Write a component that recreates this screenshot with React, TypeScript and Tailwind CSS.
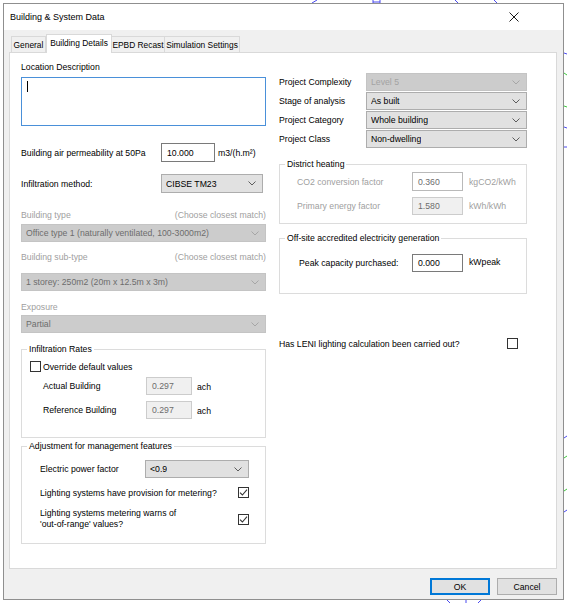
import clsx from "clsx";

function Chevron({ dim = false }: { dim?: boolean }) {
  return (
    <svg width="8" height="5" viewBox="0 0 8 5" className="shrink-0">
      <polyline
        points="0.5,0.5 4,4 7.5,0.5"
        fill="none"
        stroke={dim ? "#a6a6a6" : "#5c5c5c"}
        strokeWidth="1"
      />
    </svg>
  );
}

function Select({
  value,
  disabled = false,
  className,
  textClass,
}: {
  value: string;
  disabled?: boolean;
  className?: string;
  textClass?: string;
}) {
  return (
    <div
      className={clsx(
        "flex shrink-0 items-center justify-between border pl-[4px] pr-[6px]",
        disabled ? "border-[#c4c4c4] bg-[#cccccc]" : "border-[#adadad] bg-[#e1e1e1]",
        className,
      )}
    >
      <span className={clsx("truncate", textClass ?? (disabled ? "text-[#6d6d6d]" : "text-black"))}>
        {value}
      </span>
      <Chevron dim={disabled} />
    </div>
  );
}

function Field({
  value,
  className,
  variant = "normal",
}: {
  value: string;
  className?: string;
  variant?: "normal" | "readonly" | "disabled";
}) {
  return (
    <div
      className={clsx(
        "flex shrink-0 items-center border pl-[5px]",
        variant === "normal" && "border-[#7a7a7a] bg-white text-black",
        variant === "readonly" && "border-[#b9b9b9] bg-white text-[#6d6d6d]",
        variant === "disabled" && "border-[#cccccc] bg-[#f0f0f0] text-[#6d6d6d]",
        className,
      )}
    >
      {value}
    </div>
  );
}

function Check({ checked = false }: { checked?: boolean }) {
  return (
    <div className="flex h-[11px] w-[11px] shrink-0 items-center justify-center border border-[#333333] bg-white">
      {checked && (
        <svg width="9" height="9" viewBox="0 0 9 9">
          <path d="M1 4.6 L3.4 7 L8 1.6" fill="none" stroke="#333333" strokeWidth="1.1" />
        </svg>
      )}
    </div>
  );
}

function Group({
  title,
  className,
  children,
}: {
  title: string;
  className?: string;
  children: React.ReactNode;
}) {
  return (
    <fieldset className={clsx("border border-[#dcdcdc]", className)}>
      <legend className="ml-[5px] h-[12px] px-[2px] leading-[12px]">{title}</legend>
      {children}
    </fieldset>
  );
}

function Backdrop() {
  // bits of the drawing canvas that peek out round the dialog
  return (
    <svg className="absolute inset-0" width="567" height="603" viewBox="0 0 567 603">
      <g fill="none" strokeWidth="1">
        <path d="M312 3 L317 0" stroke="#4a4af0" />
        <path d="M373 0 L373 3 M380 0 L380 3 M373 2 L380 2" stroke="#4a4af0" />
        <path d="M455 0 L458 3" stroke="#4a4af0" />
        <path d="M494 0 L497 3" stroke="#4a4af0" />
        <path d="M564 53 L567 54" stroke="#4a4af0" />
        <path d="M564 73 L567 75" stroke="#3cc83c" />
        <path d="M564 106 L567 107" stroke="#3cc83c" />
        <path d="M564 127 L567 128" stroke="#4a4af0" />
        <path d="M564 147 L567 147" stroke="#4a4af0" />
        <path d="M564 438 L567 436" stroke="#4a4af0" />
        <path d="M564 458 L567 456" stroke="#3cc83c" />
        <path d="M564 491 L567 489" stroke="#3cc83c" />
        <path d="M564 512 L567 510" stroke="#4a4af0" />
        <path d="M447 600 L450 603 M466 600 L466 603 M478 603 L481 600" stroke="#4a4af0" />
      </g>
    </svg>
  );
}

const tabs = [
  { label: "General", w: "w-[35px]" },
  { label: "Building Details", w: "w-[66px]", active: true },
  { label: "EPBD Recast", w: "w-[54px]" },
  { label: "Simulation Settings", w: "w-[76px]" },
];

export default function App() {
  return (
    <div className="relative h-[603px] w-[567px] overflow-hidden bg-white font-['Liberation_Sans',Arial,sans-serif] text-[8.7px] leading-[12px] text-black">
      <Backdrop />
      <div className="relative ml-[3px] mt-[3px] flex h-[597px] w-[561px] flex-col border border-[#8f8f8f] bg-[#f0f0f0]">
        {/* title bar */}
        <div className="flex h-[26px] shrink-0 items-center justify-between bg-white pl-[6px] pr-[44px]">
          <span className="text-[9px]">Building &amp; System Data</span>
          <svg width="10" height="10" viewBox="0 0 10 10">
            <path d="M0.5 0.5 L9.5 9.5 M9.5 0.5 L0.5 9.5" stroke="#1a1a1a" strokeWidth="1" />
          </svg>
        </div>

        {/* tabs */}
        <div className="mt-[4px] flex h-[18px] items-end pl-[7px]">
          {tabs.map((t) =>
            t.active ? (
              <div
                key={t.label}
                className={clsx(
                  "relative z-10 -mb-px flex h-[19px] items-center justify-center border border-b-0 border-[#d9d9d9] bg-white pb-[2px] text-[8.4px]",
                  t.w,
                )}
              >
                {t.label}
              </div>
            ) : (
              <div
                key={t.label}
                className={clsx(
                  "-ml-px flex h-[16px] items-center justify-center border border-b-0 border-[#d9d9d9] bg-[#f0f0f0] text-[8.4px] first:ml-0",
                  t.w,
                )}
              >
                {t.label}
              </div>
            ),
          )}
        </div>

        {/* tab panel */}
        <div className="ml-[5px] flex h-[517px] w-[548px] gap-[13px] border border-[#d9d9d9] bg-white pl-[11px]">
          {/* left column */}
          <div className="flex w-[245px] flex-col">
            <div className="mt-[8px] h-[12px]">Location Description</div>
            <div className="mt-[4px] h-[49px] border border-[#4a90d9] bg-white pl-[5px] pt-[3px]">
              <div className="h-[11px] w-px bg-black" />
            </div>

            <div className="mt-[17px] flex h-[19px] items-center">
              <span className="w-[140px]">Building air permeability at 50Pa</span>
              <Field value="10.000" className="h-[19px] w-[54px]" />
              <span className="ml-[3px]">m3/(h.m²)</span>
            </div>

            <div className="mt-[12px] flex h-[19px] items-center">
              <span className="w-[140px]">Infiltration method:</span>
              <Select value="CIBSE TM23" className="h-[19px] w-[102px]" />
            </div>

            <div className="mt-[16px] flex h-[12px] justify-between text-[#a0a0a0]">
              <span>Building type</span>
              <span>(Choose closest match)</span>
            </div>
            <Select
              disabled
              value="Office type 1 (naturally ventilated, 100-3000m2)"
              className="mt-[3px] h-[18px] w-[245px]"
            />

            <div className="mt-[9px] flex h-[12px] justify-between text-[#a0a0a0]">
              <span>Building sub-type</span>
              <span>(Choose closest match)</span>
            </div>
            <Select
              disabled
              value="1 storey: 250m2 (20m x 12.5m x 3m)"
              className="mt-[10px] h-[18px] w-[245px]"
            />

            <div className="mt-[10px] h-[12px] text-[#a0a0a0]">Exposure</div>
            <Select disabled value="Partial" className="mt-[2px] h-[18px] w-[245px]" />

            <Group title="Infiltration Rates" className="mt-[10px] h-[95px]">
              <div className="mt-[6px] flex h-[11px] items-center pl-[8px]">
                <Check />
                <span className="ml-[2px]">Override default values</span>
              </div>
              <div className="mt-[5px] flex h-[18px] items-center pl-[21px]">
                <span className="w-[103px]">Actual Building</span>
                <Field variant="disabled" value="0.297" className="h-[18px] w-[46px]" />
                <span className="ml-[5px] pt-[2px]">ach</span>
              </div>
              <div className="mt-[6px] flex h-[18px] items-center pl-[21px]">
                <span className="w-[103px]">Reference Building</span>
                <Field variant="disabled" value="0.297" className="h-[18px] w-[46px]" />
                <span className="ml-[5px] pt-[2px]">ach</span>
              </div>
            </Group>

            <Group title="Adjustment for management features" className="mt-[2px] h-[104px]">
              <div className="mt-[8px] flex h-[18px] items-center pl-[18px]">
                <span className="w-[105px]">Electric power factor</span>
                <Select value="<0.9" className="h-[18px] w-[104px]" />
              </div>
              <div className="mt-[9px] flex h-[11px] items-center justify-between pl-[18px] pr-[16px]">
                <span>Lighting systems have provision for metering?</span>
                <Check checked />
              </div>
              <div className="mt-[10px] flex items-center justify-between pl-[18px] pr-[16px] leading-[11px]">
                <span>
                  Lighting systems metering warns of
                  <br />
                  'out-of-range' values?
                </span>
                <Check checked />
              </div>
            </Group>
          </div>

          {/* right column */}
          <div className="flex w-[248px] flex-col">
            <div className="mt-[20px] flex flex-col gap-[1px]">
              {[
                { label: "Project Complexity", value: "Level 5", disabled: true },
                { label: "Stage of analysis", value: "As built" },
                { label: "Project Category", value: "Whole building" },
                { label: "Project Class", value: "Non-dwelling" },
              ].map((r) => (
                <div key={r.label} className="flex h-[18px] items-center">
                  <span className="w-[87px]">{r.label}</span>
                  <Select
                    value={r.value}
                    disabled={r.disabled}
                    textClass={r.disabled ? "text-[#a3a3a3]" : undefined}
                    className="h-[18px] w-[161px]"
                  />
                </div>
              ))}
            </div>

            <Group title="District heating" className="mt-[10px] h-[66px]">
              <div className="mt-[2px] flex h-[19px] items-center pl-[17px] text-[#a0a0a0]">
                <span className="w-[115px]">CO2 conversion factor</span>
                <Field variant="readonly" value="0.360" className="h-[19px] w-[51px]" />
                <span className="ml-[6px]">kgCO2/kWh</span>
              </div>
              <div className="mt-[6px] flex h-[18px] items-center pl-[17px] text-[#a0a0a0]">
                <span className="w-[115px]">Primary energy factor</span>
                <Field variant="disabled" value="1.580" className="h-[18px] w-[51px]" />
                <span className="ml-[6px]">kWh/kWh</span>
              </div>
            </Group>

            <Group title="Off-site accredited electricity generation" className="mt-[8px] h-[62px]">
              <div className="mt-[10px] flex h-[18px] items-center pl-[19px]">
                <span className="w-[113px]">Peak capacity purchased:</span>
                <Field value="0.000" className="h-[18px] w-[51px]" />
                <span className="ml-[6px] -mt-[2px]">kWpeak</span>
              </div>
            </Group>

            <div className="mt-[44px] flex h-[11px] items-center justify-between pr-[9px]">
              <span>Has LENI lighting calculation been carried out?</span>
              <Check />
            </div>
          </div>
        </div>

        {/* buttons */}
        <div className="mt-[9px] flex justify-end gap-[7px] pr-[6px]">
          <button className="flex h-[17px] w-[60px] items-center justify-center border border-[#0078d7] bg-[#e1e1e1] shadow-[inset_0_0_0_1px_#0078d7]">
            OK
          </button>
          <button className="flex h-[17px] w-[60px] items-center justify-center border border-[#adadad] bg-[#e1e1e1]">
            Cancel
          </button>
        </div>
      </div>
    </div>
  );
}
